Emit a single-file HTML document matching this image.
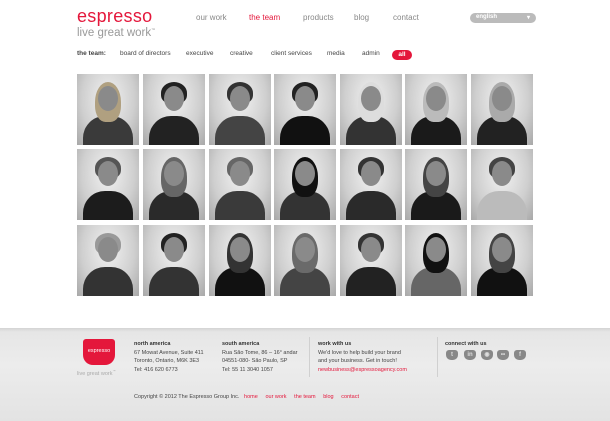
<!DOCTYPE html>
<html><head><meta charset="utf-8"><style>
*{margin:0;padding:0;box-sizing:border-box}
body{width:610px;height:421px;background:#fff;font-family:"Liberation Sans",sans-serif;position:relative;overflow:hidden}
.a{position:absolute;white-space:nowrap}
.logo{left:77px;top:6px;font-size:18px;color:#e4173b;letter-spacing:0.3px}
.tag{left:77px;top:27px;font-size:11.5px;color:#999}
.nav{top:13px;font-size:8px;color:#888}
.sub{top:50px;font-size:6.5px;color:#444}
.lang{left:470px;top:13px;width:66px;height:10px;border-radius:5px;background:#bbb;color:#fff;font-size:6px;padding:1px 6px;font-weight:bold}
.all{left:392px;top:50px;width:20px;height:10px;border-radius:5px;background:#e4173b;color:#fff;font-size:6.5px;text-align:center;line-height:10px;font-weight:bold}
.p{position:absolute;width:62px;height:71px;overflow:hidden;background:radial-gradient(ellipse at 50% 35%,#f2f2f2 0%,#cfcfcf 60%,#a8a8a8 100%)}
.p .b{position:absolute;left:6px;top:42px;width:50px;height:40px;border-radius:22px 22px 0 0;background:#2a2a2a}
.p .h{position:absolute;left:21px;top:12px;width:20px;height:25px;border-radius:50%;background:#8a8a8a}
.p .hr{position:absolute;left:18px;top:8px;width:26px;height:22px;border-radius:50% 50% 40% 40%;background:#333}
.foot{left:0;top:328px;width:610px;height:93px;background:linear-gradient(#d4d4d4,#e6e6e6 4px,#ececec 40%,#e3e3e3);}
.f{font-size:5.5px;color:#444;line-height:8.5px}
.fh{font-weight:bold;color:#333}
.red{color:#e4173b}
.ic{position:absolute;top:350px;width:12px;height:10px;background:#888;border-radius:3px 3px 5px 5px;color:#ddd;font-size:6px;font-weight:bold;text-align:center;line-height:10px}
</style></head><body>
<div class="a logo">espresso</div>
<div class="a tag">live great work<sup style="font-size:4px">™</sup></div>
<div class="a nav" style="left:196px">our work</div>
<div class="a nav" style="left:249px;color:#e4173b">the team</div>
<div class="a nav" style="left:303px">products</div>
<div class="a nav" style="left:354px">blog</div>
<div class="a nav" style="left:393px">contact</div>
<div class="a lang">english<span style="float:right">▾</span></div>
<div class="a sub" style="left:77px;font-weight:bold">the team:</div>
<div class="a sub" style="left:120px">board of directors</div>
<div class="a sub" style="left:186px">executive</div>
<div class="a sub" style="left:230px">creative</div>
<div class="a sub" style="left:271px">client services</div>
<div class="a sub" style="left:327px">media</div>
<div class="a sub" style="left:362px">admin</div>
<div class="a all">all</div>

<div id="g"></div>
<script>
var xs=[77,143,209,274,340,405,471],ys=[74,149,225];
var bodies=[['#3a3a3a','#b0a080',1],['#222','#222',0],['#444','#333',0],['#111','#222',0],['#333','#ddd',1],['#1a1a1a','#bbb',1],['#222','#aaa',1],
['#1c1c1c','#555',0],['#2a2a2a','#666',1],['#3a3a3a','#666',0],['#333','#111',1],['#2a2a2a','#333',0],['#1a1a1a','#444',1],['#bbb','#444',0],
['#333','#999',0],['#333','#222',0],['#111','#333',1],['#444','#6a6a6a',1],['#222','#333',0],['#666','#111',1],['#111','#444',1]];
var h='';var k=0;
for(var r=0;r<3;r++)for(var c=0;c<7;c++){var d=bodies[k++];
h+='<div class="p" style="left:'+xs[c]+'px;top:'+ys[r]+'px"><div class="b" style="background:'+d[0]+'"></div><div class="hr" style="background:'+d[1]+(d[2]?';height:40px;':'')+'"></div><div class="h"></div></div>';}
document.getElementById('g').innerHTML=h;
</script>

<div class="a foot"></div>
<div class="a" style="left:83px;top:339px;width:32px;height:26px;background:#e4173b;border-radius:3px 3px 10px 10px;color:#fff;font-size:5.5px;text-align:center;line-height:24px">espresso</div>
<div class="a f" style="left:77px;top:367px;color:#aaa">live great work<sup style="font-size:3px">™</sup></div>
<div class="a f" style="left:134px;top:340px"><span class="fh">north america</span><br>67 Mowat Avenue, Suite 411<br>Toronto, Ontario, M6K 3E3<br>Tel: 416 620 6773</div>
<div class="a f" style="left:222px;top:340px"><span class="fh">south america</span><br>Rua São Tome, 86 – 16° andar<br>04551-080- São Paulo, SP<br>Tel: 55 11 3040 1057</div>
<div class="a" style="left:309px;top:337px;width:1px;height:40px;background:#d0d0d0"></div>
<div class="a f" style="left:318px;top:340px"><span class="fh">work with us</span><br>We'd love to help build your brand<br>and your business. Get in touch!<br><span class="red">newbusiness@espressoagency.com</span></div>
<div class="a" style="left:437px;top:337px;width:1px;height:40px;background:#d0d0d0"></div>
<div class="a f fh" style="left:445px;top:340px">connect with us</div>
<div class="ic" style="left:446px">t</div>
<div class="ic" style="left:464px">in</div>
<div class="ic" style="left:481px">◉</div>
<div class="ic" style="left:497px">••</div>
<div class="ic" style="left:514px">f</div>
<div class="a f" style="left:134px;top:393px">Copyright © 2012 The Espresso Group Inc. &nbsp;&nbsp;<span class="red">home &nbsp;&nbsp;&nbsp; our work &nbsp;&nbsp;&nbsp; the team &nbsp;&nbsp;&nbsp; blog &nbsp;&nbsp;&nbsp; contact</span></div>
</body></html>
